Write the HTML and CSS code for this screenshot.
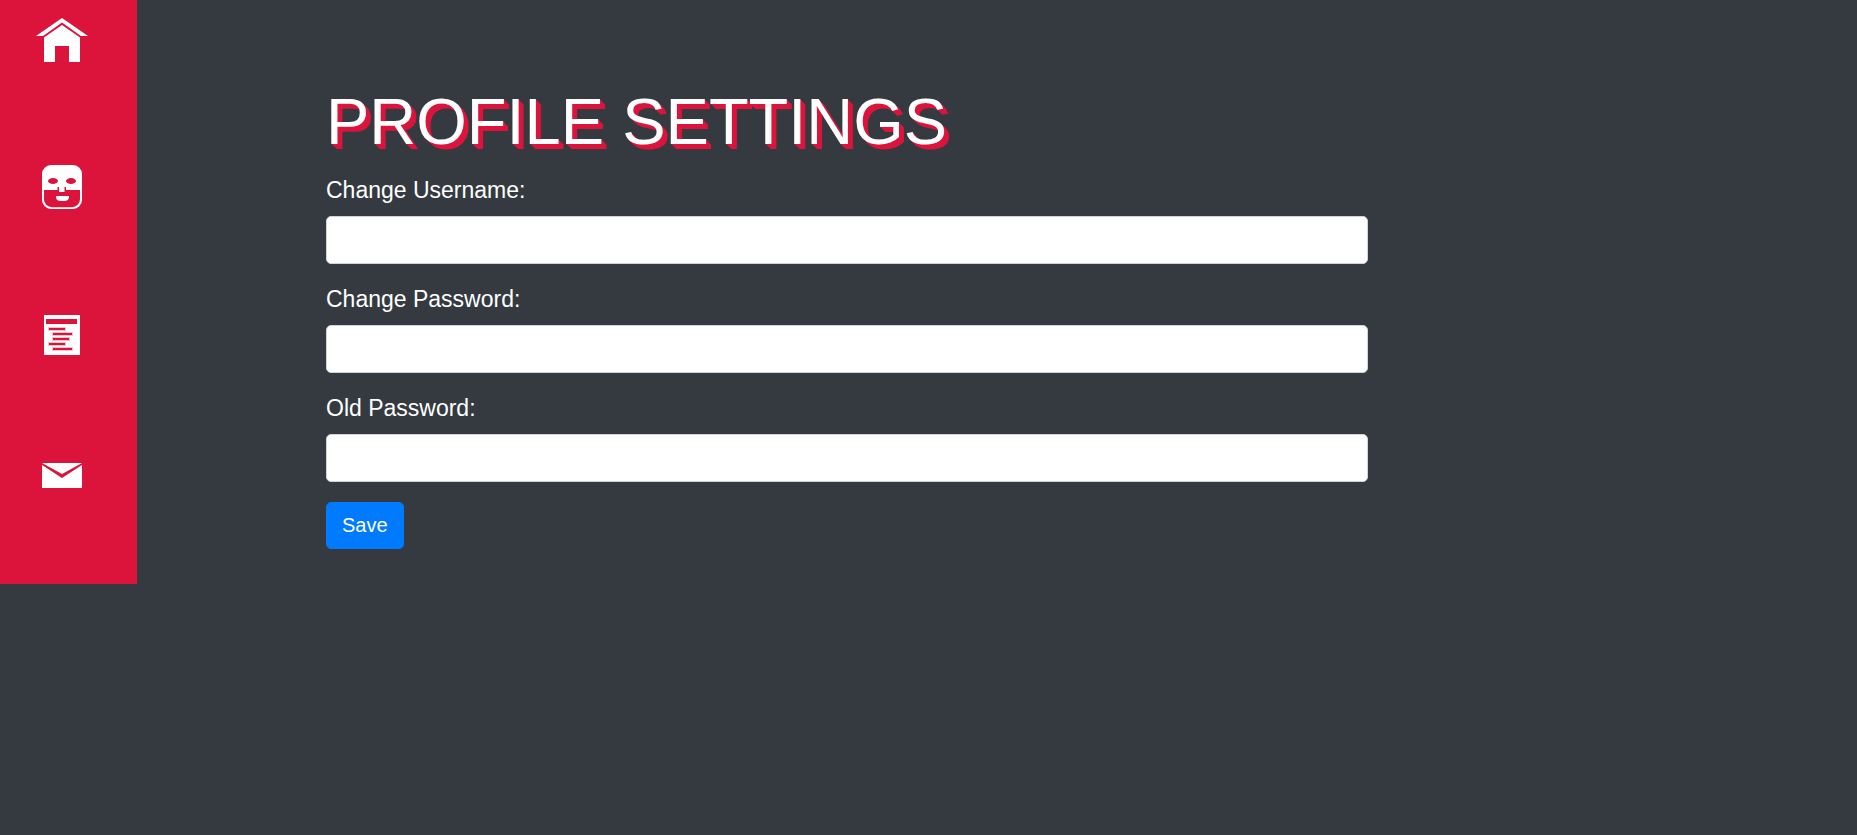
FILE: index.html
```html
<!DOCTYPE html>
<html lang="en">
<head>
<meta charset="utf-8">
<meta name="viewport" content="width=device-width, initial-scale=1">
<title>Profile Settings</title>
<link rel="stylesheet" href="styles.css">
</head>
<body>
<div class="layout">
  <nav class="sidebar" aria-label="Main">
    <a class="nav-link" href="#home" aria-label="Home">
      <svg class="nav-icon" viewBox="0 0 52 44" aria-hidden="true">
        <path d="M0 18 L26 0 L52 18 H45 L26 4.5 L7 18 Z"/>
        <path d="M8 19.500 L26 7 L44 19.500 V44 H33 V28 H19 V44 H8 Z"/>
      </svg>
    </a>
    <a class="nav-link" href="#profile" aria-label="Profile">
      <svg class="nav-icon" viewBox="0 0 52 44" aria-hidden="true">
        <path fill-rule="evenodd" d="M15 0 H37 A9 9 0 0 1 46 9 V35 A9 9 0 0 1 37 44 H15 A9 9 0 0 1 6 35 V9 A9 9 0 0 1 15 0 Z M8 25 V34 A8 8 0 0 0 16 42.300 H36 A8 8 0 0 0 44 34 V25 H30 V22 H28.500 V27 H23 V22 H21.500 V25 Z M12 16 a5 3 0 1 0 10 0 a5 3 0 1 0 -10 0 Z M30 16 a5 3 0 1 0 10 0 a5 3 0 1 0 -10 0 Z"/>
        <path d="M20 31 H33 V32 Q33 36 28 36 H25 Q20 36 20 32 Z"/>
      </svg>
    </a>
    <a class="nav-link" href="#posts" aria-label="Posts">
      <svg class="nav-icon" viewBox="0 0 52 44" aria-hidden="true">
        <path d="M8 3 H44 V43 H8 Z"/>
        <path class="cut" d="M10 7 H41 V12 H10 Z"/>
        <path class="cut-edge" d="M12 15h18v4H12Z M16 20h21v4H16Z M16 25h18v4H16Z M12 30h18v4H12Z M16 35h21v4H16Z"/>
        <path class="cut" d="M13 16h16v2H13Z M17 21h19v2H17Z M17 26h16v2H17Z M13 31h16v2H13Z M17 36h19v2H17Z"/>
      </svg>
    </a>
    <a class="nav-link" href="#messages" aria-label="Messages">
      <svg class="nav-icon" viewBox="0 0 52 44" aria-hidden="true">
        <path d="M6 4 H46 L26 15 Z"/>
        <path d="M6 6 L26 19 L46 6 V29 H6 Z"/>
      </svg>
    </a>
  </nav>
  <main class="content">
    <form class="settings">
      <h1 class="title">PROFILE SETTINGS</h1>
      <div class="field">
        <label class="label" for="username">Change Username:</label>
        <input class="input" id="username" type="text">
      </div>
      <div class="field">
        <label class="label" for="password">Change Password:</label>
        <input class="input" id="password" type="password">
      </div>
      <div class="field">
        <label class="label" for="old-password">Old Password:</label>
        <input class="input" id="old-password" type="password">
      </div>
      <button class="save" type="submit">Save</button>
    </form>
  </main>
</div>
</body>
</html>
```

FILE: styles.css
```css
* {
  box-sizing: border-box;
}

body {
  margin: 0;
  background: #343a40;
  color: #fff;
  font-family: "Liberation Sans", Arial, sans-serif;
}

.layout {
  display: flex;
  align-items: flex-start;
}

.sidebar {
  display: flex;
  flex: none;
  flex-direction: column;
  gap: 103px;
  padding: 18px 49px 81px 36px;
  background: #dc143c;
}

.nav-link {
  display: block;
}

.nav-icon {
  display: block;
  width: 52px;
  height: 44px;
  fill: #fff;
}

.cut {
  fill: #dc143c;
}

.cut-edge {
  fill: #f3c3cc;
}

.content {
  display: grid;
  flex: 1;
  grid-template-columns: 189fr 1042fr 489fr;
  padding-top: 83px;
}

.settings {
  grid-column: 2;
  min-width: 0;
}

.title {
  margin: 0 0 11px;
  font-size: 65px;
  font-weight: 400;
  line-height: 78px;
  text-shadow: 1px 1px #dc143c, 2px 2px #dc143c, 3px 3px #dc143c, 4px 4px #dc143c, 5px 5px #dc143c;
}

.field {
  margin-bottom: 17px;
}

.label {
  display: block;
  margin-bottom: 8px;
  font-size: 23px;
  line-height: 36px;
}

.input {
  display: block;
  width: 100%;
  height: 48px;
  padding: 8px 15px;
  border: 1px solid #ced4da;
  border-radius: 5px;
  background: #fff;
  color: #495057;
  font: inherit;
  font-size: 20px;
}

.save {
  margin-top: 3px;
  padding: 8px 15px;
  border: 1px solid #007bff;
  border-radius: 5px;
  background: #007bff;
  color: #fff;
  font: inherit;
  font-size: 20px;
  line-height: 29px;
  cursor: pointer;
}
```
